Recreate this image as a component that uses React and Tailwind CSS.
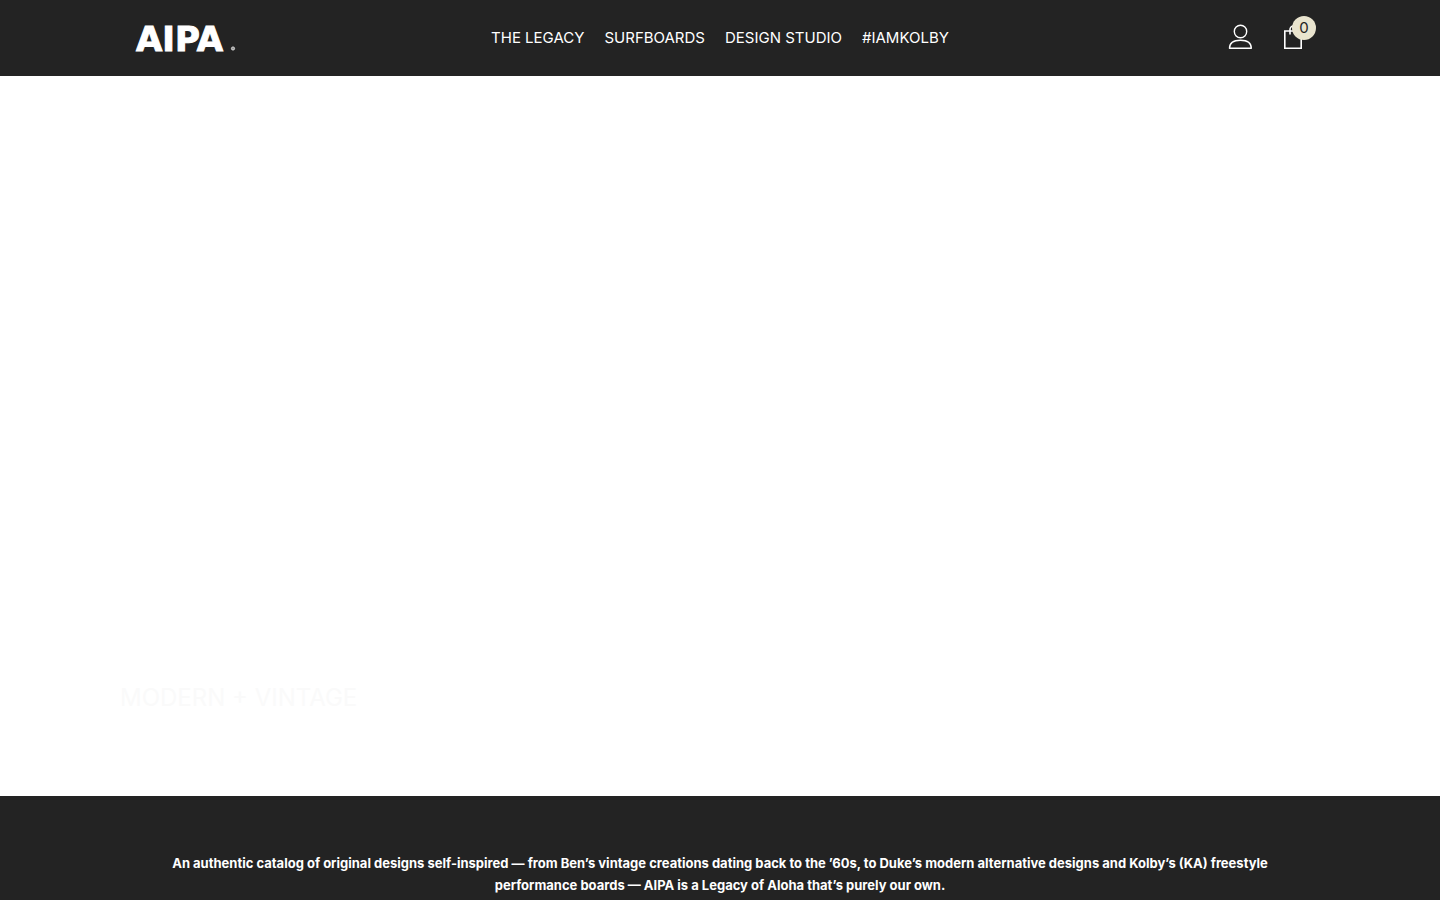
const links = ["THE LEGACY", "SURFBOARDS", "DESIGN STUDIO", "#IAMKOLBY"];

function Logo() {
  return (
    <svg className="block" width="104" height="48" viewBox="0 0 104 48" role="img" aria-label="AIPA">
      <text x="4" y="37" fontSize="34" fontWeight="700" fill="#fff" stroke="#fff" strokeWidth="1" className="font-['DejaVu_Sans',sans-serif]">AIPA</text>
      <circle cx="101" cy="34.5" r="1.6" fill="#999" stroke="#eee" strokeWidth="0.8" />
    </svg>
  );
}

function Header() {
  return (
    <header className="grid h-19 grid-cols-[1fr_auto_1fr] items-center bg-[#232323] px-30 text-white">
      <a href="#home" className="ml-3 justify-self-start"><Logo /></a>
      <nav className="flex gap-5 text-[15px] leading-6">
        {links.map((label) => (
          <a key={label} href="#nav">{label}</a>
        ))}
      </nav>
      <div className="flex items-center gap-7 justify-self-end pb-0.5">
        <a href="#account" aria-label="Account">
          <svg className="block" width="24" height="26" viewBox="0 0 24 26" fill="none" stroke="#fff" strokeWidth="1.4">
            <circle cx="12.5" cy="7.5" r="6.2" />
            <path d="M1.5 24.3C1.5 18.5 6.5 16.2 12.5 16.2S23.3 18.5 23.3 24.3Z" strokeLinejoin="round" />
          </svg>
        </a>
        <button type="button" aria-label="Cart, 0 items" className="relative mr-4">
          <svg className="block" width="24" height="26" viewBox="0 0 24 26" fill="none" stroke="#fff" strokeWidth="1.6">
            <path d="M4.8 7H21.2V24.2H4.8Z" />
            <path d="M10 10.5V5.5a3.5 3.5 0 0 1 7 0V10.5" />
          </svg>
          <span className="absolute -top-2 left-3 flex size-6 items-center justify-center rounded-full bg-[#e9e4ce] text-[15px] text-[#232323]">0</span>
        </button>
      </div>
    </header>
  );
}

export default function App() {
  return (
    <div className="min-h-screen bg-[#232323] font-[Inter,sans-serif]">
      <Header />
      <main>
        <section className="flex h-180 items-end bg-white px-30 pb-20">
          <h1 className="text-2xl leading-9 text-[#fafafa]">MODERN + VINTAGE</h1>
        </section>
        <section className="bg-[#232323] px-36 pt-14">
          <p className="text-center text-[13px] leading-[22px] font-bold text-white">
            An authentic catalog of original designs self-inspired — from Ben’s vintage creations dating back to the ’60s, to Duke’s modern alternative designs and Kolby’s (KA) freestyle performance boards — AIPA is a Legacy of Aloha that’s purely our own.
          </p>
        </section>
      </main>
    </div>
  );
}
